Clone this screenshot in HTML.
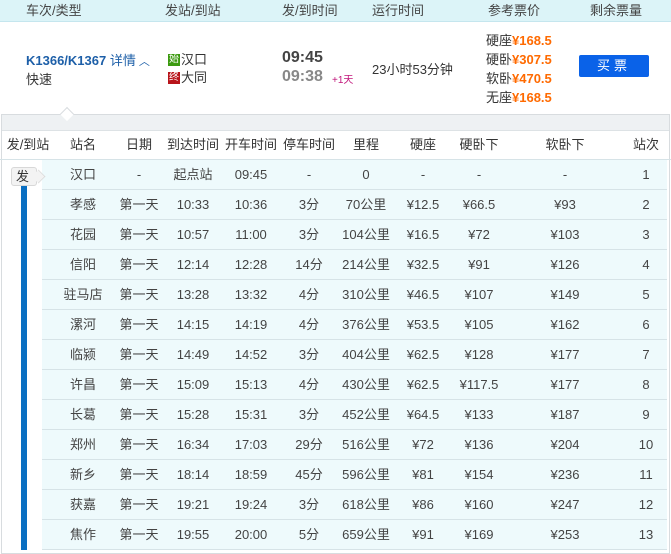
<!DOCTYPE html>
<html><head><meta charset="utf-8"><style>
*{margin:0;padding:0;box-sizing:border-box}
body{width:671px;height:550px;overflow:hidden;background:#fff;font-family:"Liberation Sans","Noto Sans CJK SC",sans-serif;font-size:13px;line-height:16px;color:#333;position:relative}
.a{position:absolute;white-space:nowrap;line-height:16px}
#hdr{position:absolute;left:0;top:0;width:671px;height:22px;background:#dcf4f8;border-bottom:1px solid #c5e6ee}
#hdr span{position:absolute;top:3px;color:#444;line-height:16px}
.pr{color:#ff6a00;font-weight:bold}
#panel{position:absolute;left:1px;top:114px;width:669px;height:440px;border:1px solid #d8dcdf;background:#fff}
#strip{position:absolute;left:0;top:0;width:667px;height:16px;background:#eef1f3;border-bottom:1px solid #dde2e5}
.row{position:absolute;left:42px;width:625px;height:30px;background:#eefafc;border-bottom:1px solid #d6e3e7}
.c{position:absolute;top:7px;height:16px;line-height:16px;transform:translateX(-50%);white-space:nowrap;color:#444}
.th .c{color:#333}
</style></head><body>
<div id="hdr"><span style="left:26px">车次/类型</span><span style="left:165px">发站/到站</span><span style="left:282px">发/到时间</span><span style="left:372px">运行时间</span><span style="left:488px">参考票价</span><span style="left:590px">剩余票量</span></div>

<div class="a" style="left:26px;top:53px;color:#1d5fa8;font-weight:bold;font-size:13px">K1366/K1367 <span style="font-weight:normal">详情</span><span style="font-weight:normal;font-size:11px"> ︿</span></div>
<div class="a" style="left:26px;top:72px">快速</div>
<div class="a" style="left:168px;top:54px;width:12px;height:12px;background:#3c9a10;color:#fff;font-size:10px;line-height:12px;text-align:center;overflow:hidden">始</div>
<div class="a" style="left:181px;top:52px">汉口</div>
<div class="a" style="left:168px;top:72px;width:12px;height:12px;background:#b8141a;color:#fff;font-size:10px;line-height:12px;text-align:center;overflow:hidden">终</div>
<div class="a" style="left:181px;top:70px">大同</div>
<div class="a" style="left:282px;top:49px;font-size:16px;line-height:18px;font-weight:bold;color:#444">09:45</div>
<div class="a" style="left:282px;top:68px;font-size:16px;line-height:18px;font-weight:bold;color:#888">09:38</div>
<div class="a" style="left:332px;top:73px;font-size:10px;color:#c0147a">+1天</div>
<div class="a" style="left:372px;top:62px">23小时53分钟</div>
<div class="a" style="left:486px;top:33px">硬座<span class="pr">¥168.5</span></div>
<div class="a" style="left:486px;top:52px">硬卧<span class="pr">¥307.5</span></div>
<div class="a" style="left:486px;top:71px">软卧<span class="pr">¥470.5</span></div>
<div class="a" style="left:486px;top:90px">无座<span class="pr">¥168.5</span></div>
<div class="a" style="left:579px;top:55px;width:70px;height:22px;background:#0a62e8;border-radius:2px;color:#fff;text-align:center;line-height:22px;letter-spacing:4px">买票</div>

<div id="panel">
<div id="strip"></div>
<div class="a" style="left:60px;top:-6px;width:10px;height:10px;background:#fff;border-left:1px solid #d8dcdf;border-top:1px solid #d8dcdf;transform:rotate(45deg)"></div>
</div>
<div class="a" style="left:0;top:130px;width:671px;height:30px;border-bottom:1px solid #d6e3e7"></div>
<div class="th" style="position:absolute;left:0;top:130px;width:671px;height:30px">
<span class="c" style="left:28px">发/到站</span><span class="c" style="left:83px">站名</span><span class="c" style="left:139px">日期</span><span class="c" style="left:193px">到达时间</span><span class="c" style="left:251px">开车时间</span><span class="c" style="left:309px">停车时间</span><span class="c" style="left:366px">里程</span><span class="c" style="left:423px">硬座</span><span class="c" style="left:479px">硬卧下</span><span class="c" style="left:565px">软卧下</span><span class="c" style="left:646px">站次</span>
</div>
<div id="rows"></div>
<div class="a" style="left:21px;top:176px;width:6px;height:374px;background:#0a6fc2"></div>
<div class="a" style="left:11px;top:167px;width:26px;height:19px;background:#f3f3f3;border:1px solid #d8d8d8;border-radius:3px;font-size:13px;line-height:17px;padding-left:4px">发</div>
<div class="a" style="left:32px;top:170px;width:13px;height:13px;background:#f3f3f3;border-right:1px solid #d8d8d8;border-top:1px solid #d8d8d8;transform:rotate(45deg) scale(.75)"></div>
<script>
var d=[["汉口","-","起点站","09:45","-","0","-","-","-","1"],
["孝感","第一天","10:33","10:36","3分","70公里","¥12.5","¥66.5","¥93","2"],
["花园","第一天","10:57","11:00","3分","104公里","¥16.5","¥72","¥103","3"],
["信阳","第一天","12:14","12:28","14分","214公里","¥32.5","¥91","¥126","4"],
["驻马店","第一天","13:28","13:32","4分","310公里","¥46.5","¥107","¥149","5"],
["漯河","第一天","14:15","14:19","4分","376公里","¥53.5","¥105","¥162","6"],
["临颍","第一天","14:49","14:52","3分","404公里","¥62.5","¥128","¥177","7"],
["许昌","第一天","15:09","15:13","4分","430公里","¥62.5","¥117.5","¥177","8"],
["长葛","第一天","15:28","15:31","3分","452公里","¥64.5","¥133","¥187","9"],
["郑州","第一天","16:34","17:03","29分","516公里","¥72","¥136","¥204","10"],
["新乡","第一天","18:14","18:59","45分","596公里","¥81","¥154","¥236","11"],
["获嘉","第一天","19:21","19:24","3分","618公里","¥86","¥160","¥247","12"],
["焦作","第一天","19:55","20:00","5分","659公里","¥91","¥169","¥253","13"]];
var xs=[83,139,193,251,309,366,423,479,565,646],h="";
d.forEach(function(r,i){h+='<div class="row" style="top:'+(160+i*30)+'px">';
r.forEach(function(v,j){h+='<span class="c" style="left:'+(xs[j]-42)+'px">'+v+'</span>'});h+='</div>'});
document.getElementById('rows').innerHTML=h;
</script>
</body></html>
